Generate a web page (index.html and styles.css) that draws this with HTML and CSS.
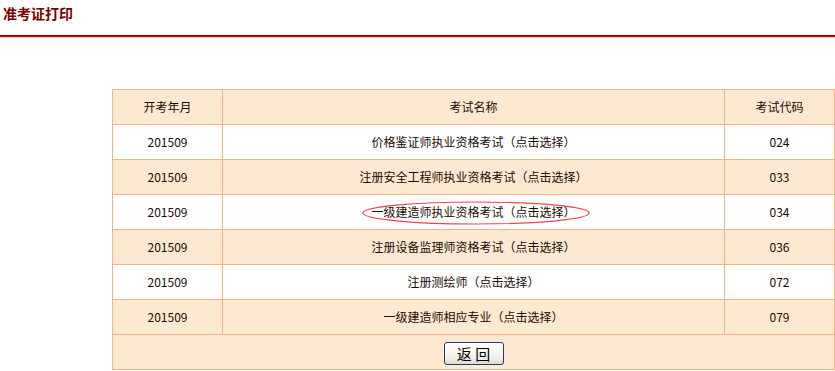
FILE: index.html
```html
<!DOCTYPE html>
<html lang="zh-CN">
<head>
<meta charset="utf-8">
<title>准考证打印</title>
<link rel="stylesheet" href="styles.css">
</head>
<body>
<div class="header">
  <h1 class="title">准考证打印</h1>
</div>
<div class="rule"></div>
<div class="content">
  <table class="grid">
    <colgroup>
      <col class="c1"><col class="c2"><col class="c3">
    </colgroup>
    <tr class="alt">
      <td>开考年月</td><td>考试名称</td><td>考试代码</td>
    </tr>
    <tr>
      <td>201509</td><td>价格鉴证师执业资格考试（点击选择）</td><td>024</td>
    </tr>
    <tr class="alt">
      <td>201509</td><td>注册安全工程师执业资格考试（点击选择）</td><td>033</td>
    </tr>
    <tr>
      <td>201509</td><td><span class="marked">一级建造师执业资格考试（点击选择）<svg class="ring" viewBox="0 0 228 24" width="228" height="24"><ellipse cx="114" cy="12" rx="113" ry="11" fill="none" stroke="#ee4450" stroke-width="1.2"/></svg></span></td><td>034</td>
    </tr>
    <tr class="alt">
      <td>201509</td><td>注册设备监理师资格考试（点击选择）</td><td>036</td>
    </tr>
    <tr>
      <td>201509</td><td>注册测绘师（点击选择）</td><td>072</td>
    </tr>
    <tr class="alt">
      <td>201509</td><td>一级建造师相应专业（点击选择）</td><td>079</td>
    </tr>
    <tr class="alt">
      <td colspan="3" class="foot"><button class="back">返 回</button></td>
    </tr>
  </table>
</div>
</body>
</html>
```
FILE: styles.css
```css
html, body {
  margin: 0;
  padding: 0;
  background: #ffffff;
}
body {
  font-family: "Noto Sans CJK SC", "Liberation Sans", sans-serif;
  font-size: 12px;
  color: #000;
}
.header {
  height: 35px;
  padding-left: 3px;
}
.title {
  margin: 0;
  padding-top: 4px;
  font-size: 14px;
  line-height: 18px;
  font-weight: bold;
  color: #7a0000;
}
.rule {
  height: 2px;
  background: #b30000;
  border-bottom: 1px solid #f2dcc0;
}
.content {
  padding-top: 51px;
  padding-left: 112px;
}
.grid {
  border-collapse: collapse;
  width: 722px;
  table-layout: fixed;
}
.c1 { width: 110px; }
.c2 { width: 502px; }
.c3 { width: 110px; }
.grid td {
  border: 1px solid #f3b387;
  height: 34px;
  padding: 0;
  text-align: center;
  vertical-align: middle;
  line-height: 16px;
  color: #1a0a05;
}
.grid tr.alt td {
  background: #fde9d1;
}
.marked {
  position: relative;
  display: inline-block;
}
.ring {
  position: absolute;
  left: -9px;
  top: -3px;
  pointer-events: none;
}
.grid td.foot {
  height: 34px;
}
.back {
  width: 60px;
  height: 23px;
  padding: 0;
  font-family: "Noto Sans CJK SC", sans-serif;
  font-size: 15px;
  line-height: 20px;
  color: #000;
  border: 1px solid #1c3f73;
  border-radius: 3px;
  background: linear-gradient(#ffffff, #f1f0ea 70%, #dcdad0);
  margin-top: 3px;
}
```
